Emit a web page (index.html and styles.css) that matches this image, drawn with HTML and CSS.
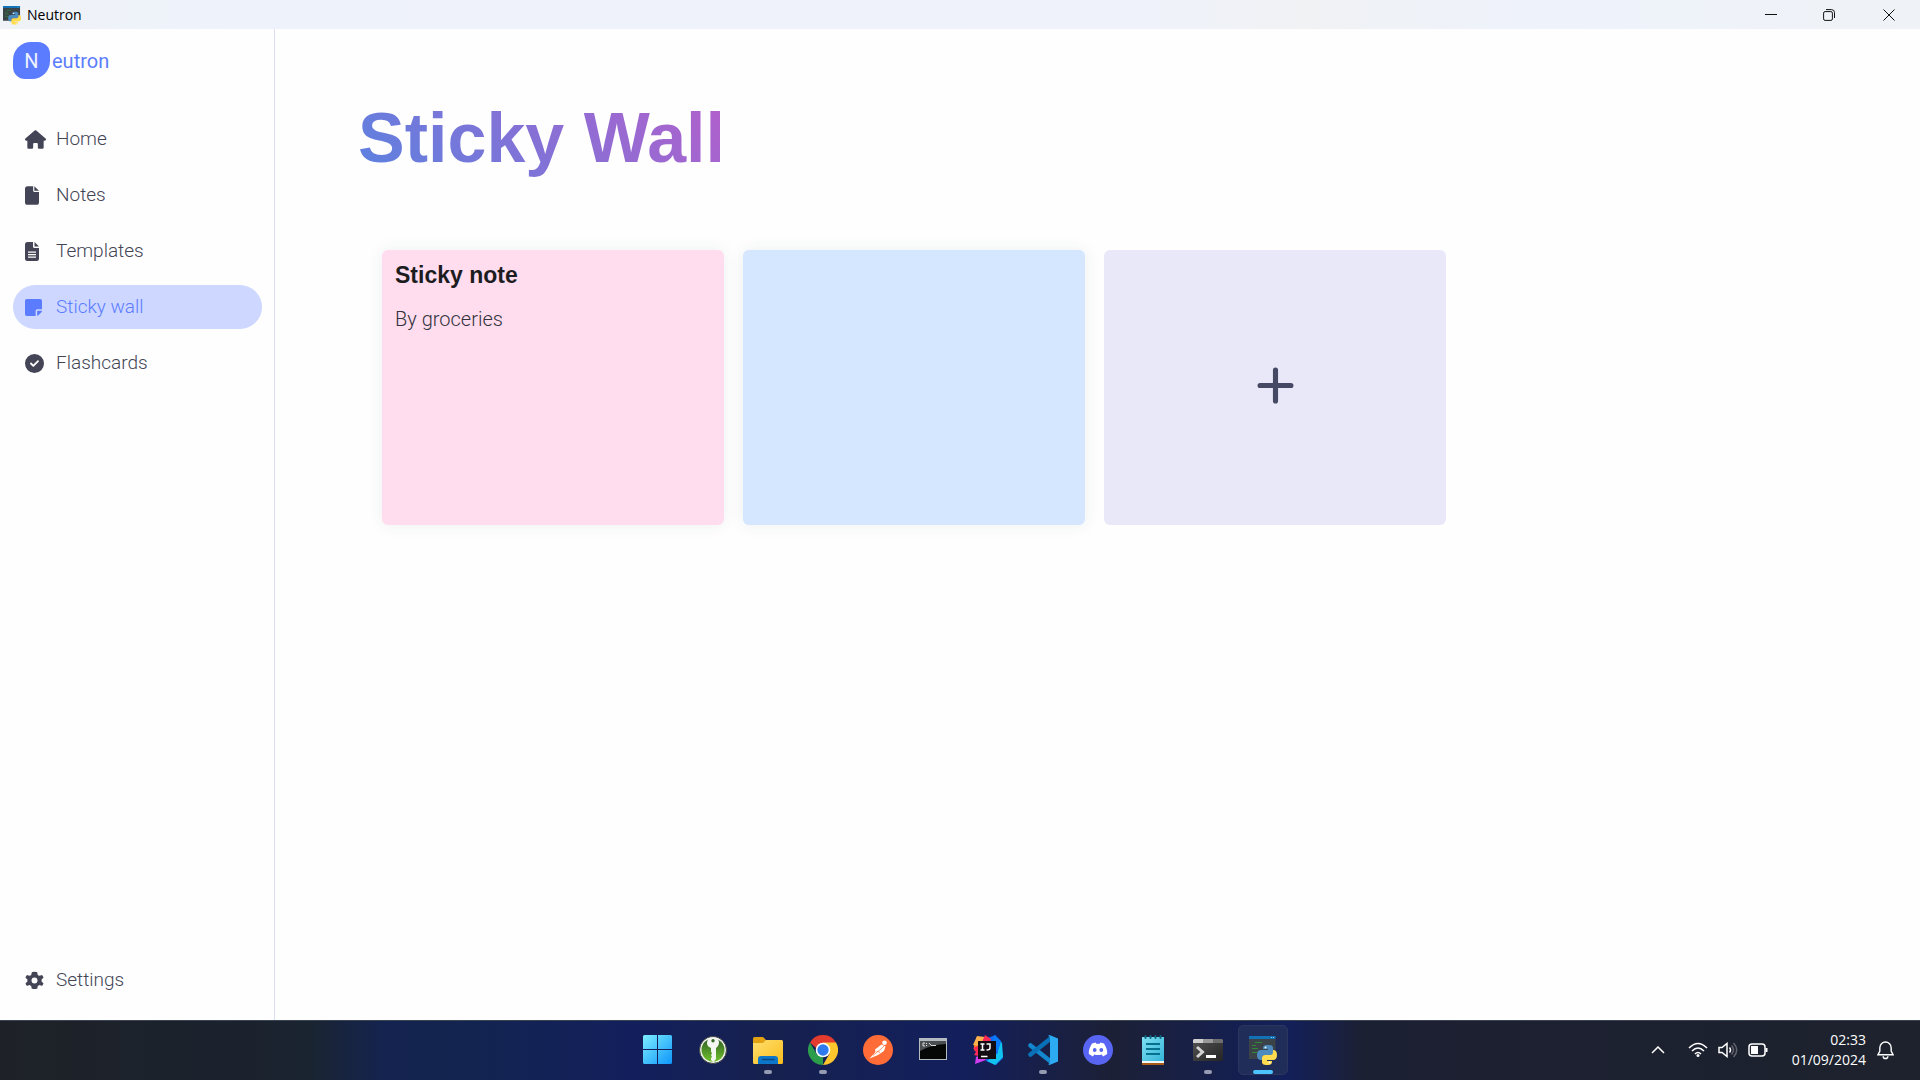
FILE: index.html
```html
<!DOCTYPE html>
<html lang="en">
<head>
<meta charset="utf-8">
<title>Neutron</title>
<link rel="stylesheet" href="styles.css">
</head>
<body>
<header class="titlebar">
  <svg class="app-icon" viewBox="0 0 28 30"><use href="#py-app"/></svg>
  <span class="titlebar-name">Neutron</span>
  <div class="window-controls">
    <button aria-label="Minimize"><svg viewBox="0 0 12 12"><path d="M0 5.500h12"/></svg></button>
    <button aria-label="Restore"><svg viewBox="0 0 12 12"><rect x=".6" y="2.600" width="8.800" height="8.800" rx="1.500"/><path d="M3 .6h5.500a3 3 0 0 1 3 3V9"/></svg></button>
    <button aria-label="Close"><svg viewBox="0 0 12 12"><path d="M.5.5l11 11M11.500.5l-11 11"/></svg></button>
  </div>
</header>

<div class="app">
  <aside class="sidebar">
    <a class="brand" href="#"><span class="brand-mark">N</span><span>eutron</span></a>
    <nav class="nav">
      <a class="nav-link" href="#"><svg class="nav-icon wide" viewBox="0 0 576 512"><path d="M575.800 255.500c0 18-15 32.100-32 32.100h-32l.7 160.200c0 2.700-.2 5.400-.5 8.100V472c0 22.100-17.900 40-40 40H392c-22.100 0-40-17.900-40-40v-88c0-17.700-14.300-32-32-32h-64c-17.700 0-32 14.300-32 32v88c0 22.100-17.900 40-40 40h-80c-22.100 0-40-17.900-40-40V287.600H32c-18 0-32-14-32-32.100 0-9 3-17 10-24L266.400 8c7-7 15-8 22-8s15 2 21 7l255.400 224.500c8 7 12 15 11 24z"/></svg>Home</a>
      <a class="nav-link" href="#"><svg class="nav-icon narrow" viewBox="0 0 384 512"><path d="M0 64C0 28.700 28.700 0 64 0h160v128c0 17.700 14.300 32 32 32h128v288c0 35.300-28.700 64-64 64H64c-35.300 0-64-28.700-64-64zm384 64H256V0z"/></svg>Notes</a>
      <a class="nav-link" href="#"><svg class="nav-icon narrow" viewBox="0 0 14 19"><path fill-rule="evenodd" d="M2.500 0Q0 0 0 2.500v14Q0 19 2.500 19h9q2.500 0 2.500-2.500V6H9.500Q8 6 8 4.500V0zM9.500 0v4.500H14zM3 9.500h8v1.200H3zM3 12h8v1.200H3zM3 14.500h8v1.200H3z"/></svg>Templates</a>
      <a class="nav-link active" href="#" aria-current="page"><svg class="nav-icon note" viewBox="0 0 448 448"><path d="M280 448H48a48 48 0 0 1-48-48V48A48 48 0 0 1 48 0h352a48 48 0 0 1 48 48v220H320a40 40 0 0 0-40 40zm168-136q0 22-14 36l-74 74q-14 14-40 18V330a18 18 0 0 1 18-18z"/></svg>Sticky wall</a>
      <a class="nav-link" href="#"><svg class="nav-icon" viewBox="0 0 512 512"><path fill-rule="evenodd" d="M256 512a256 256 0 1 0 0-512 256 256 0 0 0 0 512zm113-303L241 337c-9.400 9.400-24.600 9.400-33.900 0l-64-64c-22-22 12-56 33.900-33.900l47 47 111-111c22-22 56 12 34 33.900z"/></svg>Flashcards</a>
    </nav>
    <nav class="nav nav-bottom">
      <a class="nav-link" href="#"><svg class="nav-icon" viewBox="0 0 512 512"><path d="M495.900 166.600c3.200 8.700.5 18.400-6.400 24.600l-43.300 39.400a197 197 0 0 1 0 50.800l43.300 39.400c6.900 6.200 9.600 15.900 6.400 24.600a244 244 0 0 1-25.500 44.100c-6.100 8.300-16.500 11.300-25.600 8.400l-55.700-17.700a190 190 0 0 1-44.100 25.400l-12.500 57.100c-2 9.100-9 16.300-18.200 17.800a254 254 0 0 1-117 0c-9.200-1.500-16.200-8.700-18.200-17.800l-12.500-57.100a190 190 0 0 1-44-25.400l-55.700 17.700c-8.800 2.800-18.600.3-24.500-6.800a244 244 0 0 1-26.600-45.700c-3.200-8.700-.5-18.400 6.400-24.600l43.300-39.400a197 197 0 0 1 0-50.800l-43.300-39.400c-6.900-6.200-9.600-15.900-6.400-24.600A244 244 0 0 1 43.900 119c6-7 15.700-9.600 24.500-6.800l55.700 17.700a190 190 0 0 1 44-25.400l12.500-57.100c2-9.100 9-16.300 18.200-17.800a254 254 0 0 1 114.400 0c9.200 1.500 16.200 8.700 18.200 17.800l12.500 57.100a190 190 0 0 1 44.100 25.400l55.700-17.700c8.800-2.800 18.600-.3 24.500 6.800a244 244 0 0 1 27.700 47.600zM256 336a80 80 0 1 0 0-160 80 80 0 1 0 0 160z" fill-rule="evenodd"/></svg>Settings</a>
    </nav>
  </aside>

  <main class="content">
    <h1 class="page-title">Sticky Wall</h1>
    <section class="wall">
      <article class="card pink">
        <h2>Sticky note</h2>
        <p>By groceries</p>
      </article>
      <article class="card blue"></article>
      <button class="card add" aria-label="Add sticky note"><svg viewBox="0 0 36 36"><path d="M18 3v30M3 18h30"/></svg></button>
    </section>
  </main>
</div>

<footer class="taskbar">
  <div class="task-apps">
    <button class="task" aria-label="Start"><svg viewBox="0 0 30 30"><path fill="url(#win)" d="M1.500 0H14v14H0V1.500Q0 0 1.500 0zM15 0h12.500Q29 0 29 1.500V14H15zM0 15h14v14H1.500Q0 29 0 27.500zM15 15h14v12.500q0 1.500-1.500 1.500H15z"/></svg></button>
    <button class="task" aria-label="KeePassXC"><svg viewBox="0 0 30 30"><circle cx="15" cy="15" r="13.500" fill="#f1f3ef" stroke="#41473f"/><circle cx="15" cy="15" r="11.500" fill="url(#kp)"/><path fill="#f4f6f2" fill-rule="evenodd" d="M12 2.500h6c2 1 3 3 3 5s-1 4-3 5.500V24l-2.500 3-2.500-2v-2l1-1-1-2 1-1.500-1-2V13C10 12 9 10 9 8s1-4.500 3-5.500zM15 4a1.700 1.700 0 1 0 0 3.400A1.700 1.700 0 0 0 15 4z"/></svg></button>
    <button class="task running" aria-label="File Explorer"><svg viewBox="0 0 30 30"><path fill="#e2a212" d="M0 3.500Q0 2 1.500 2H10l3 3v6H0z"/><path fill="url(#fold)" d="M0 8h10l3-3h15.500Q30 5 30 6.500v21Q30 29 28.500 29h-27Q0 29 0 27.500z"/><path fill="#0f77ca" d="M5 29v-5q0-3 3-3h14q3 0 3 3v5z"/><path stroke="#064a86" stroke-width="1.500" stroke-linecap="round" d="M9.500 24.500h11.500"/></svg></button>
    <button class="task running" aria-label="Chrome"><svg viewBox="0 0 30 30"><path fill="#e33b2e" d="M2 7.500a15 15 0 0 1 26 0L22 13 8 13z"/><path fill="#2c9d4b" d="M2 7.500 8.600 19 15 22.500V30A15 15 0 0 1 2 7.500z"/><path fill="#fdc62c" d="M15 7.500h13A15 15 0 0 1 15 30l6.500-11.300z"/><circle cx="15" cy="15" r="7.300" fill="#fff"/><circle cx="15" cy="15" r="5.700" fill="#2d7bee"/></svg></button>
    <button class="task" aria-label="Postman"><svg viewBox="0 0 30 30"><circle cx="15" cy="15" r="15" fill="#ff6c37"/><circle cx="21.500" cy="7.700" r="2.300" fill="#fff"/><path fill="#fff" d="M18.500 9.500l4 2-1.500 4.500-6 4-8.500 3.500 6-6.500-.5-2.500z"/><path fill="none" stroke="#ff6c37" stroke-width=".7" d="M10 20.500l8-6.500 3-3M13.500 16l3.500 1.500"/></svg></button>
    <button class="task" aria-label="Command Prompt"><svg viewBox="0 0 30 30"><path fill="#b5bcc1" d="M1 3h28v22H1z"/><path fill="#050606" d="M2 6h26v18H2z"/><path fill="#4b4f51" d="M2 6h26v3Q12 10 2 16z"/><path fill="none" stroke="#ddd" d="M7 8H5v3h2M8.500 8v1M8.500 10v1M11 8l3 3M14 10.500h4"/></svg></button>
    <button class="task" aria-label="IntelliJ IDEA"><svg viewBox="0 0 30 30"><path fill="#0f6cf5" d="M15 3l7-3 6 6 2 17-7 7-10-4z"/><path fill="#12c3ef" d="M25 4l4 4 1 14-8 8-8-4 11-8z"/><path fill="#087cfa" d="M22 0l6 7-3 9-5-10z"/><path fill="#fc801d" d="M1 10l3-8 8 4-4 14-7-5z"/><path fill="#ffb14d" d="M4 1l8 1-5 9-7-1z"/><path fill="#fe2857" d="M12 0l6 4-2 6-9 2z"/><path fill="#fe2857" d="M0 13l7-3 3 12-9-2 2-3z"/><path fill="#d33df0" d="M3 22l7-3 3 6-11 4z"/><path fill="#130c12" d="M5 6h18v18H5z"/><path fill="none" stroke="#fff" stroke-width="1.500" d="M7.500 9h4M9.500 9v6M7.500 15h4M13.500 9H17v4q0 2-3.500 2M8 21.500h6.500"/></svg></button>
    <button class="task running" aria-label="Visual Studio Code"><svg viewBox="0 0 30 30"><path fill="none" stroke="#1387cf" stroke-width="4.500" stroke-linecap="round" d="M2.500 10.500L22 26"/><path fill="none" stroke="#0871b8" stroke-width="4.500" stroke-linecap="round" d="M2.500 19.500L22 4"/><path fill="#2caaf2" d="M21.500 0L30 3.500v23L21.500 30l-1.500-1q2 0 2-2V3q0-2-2-2z"/></svg></button>
    <button class="task" aria-label="Discord"><svg viewBox="0 0 30 30"><circle cx="15" cy="15" r="15" fill="#5865f2"/><path fill="#fff" fill-rule="evenodd" d="M9 8.500l3.500-1 .8 1.300h3.400l.8-1.300 3.500 1c2.300 3.500 3.500 7 3.200 10.500L20 21.500l-1.200-2q-3.800 1-7.600 0l-1.200 2L5.800 19C5.500 15.500 6.700 12 9 8.500zM11.700 13a1.900 2 0 1 0 0 4 1.900 2 0 0 0 0-4zm6.600 0a1.900 2 0 1 0 0 4 1.900 2 0 0 0 0-4z"/></svg></button>
    <button class="task" aria-label="Notepad"><svg viewBox="0 0 30 30"><path fill="#a85b16" d="M4 26h22v4H4z"/><path fill="#f4f7f8" d="M4 24h22v4H4z"/><path fill="url(#pad)" d="M4 2h22v24H4z"/><path stroke="#0d6682" stroke-width="2" stroke-linecap="round" d="M7.500 1v2M12.500 1v2M17.500 1v2M22.500 1v2" fill="none"/><path stroke="#06708f" stroke-width="1.800" d="M8 9h14M8 14h14M8 19h14" fill="none"/></svg></button>
    <button class="task running" aria-label="Terminal"><svg viewBox="0 0 30 30"><path fill="url(#term)" d="M0 5h30v20q0 1-1 1H1q-1 0-1-1z"/><path fill="#d0d0d0" d="M1 4h9v4H0V5z"/><path fill="#999" d="M10 4h10v4H10z"/><path fill="#6e6e6e" d="M20 4h9l1 1v3H20z"/><path fill="none" stroke="#d4d4d4" stroke-width="3" d="M4 12l5.500 5L4 22"/><path stroke="#fff" stroke-width="3" d="M13 21.500h10"/></svg></button>
    <button class="task current" aria-label="Neutron"><svg viewBox="0 0 28 30"><use href="#py-app"/></svg></button>
  </div>
  <div class="tray">
    <button class="tray-up" aria-label="Show hidden icons"><svg viewBox="0 0 14 8"><path d="M1 7l6-6 6 6"/></svg></button>
    <div class="tray-status">
      <svg class="wifi" viewBox="0 0 20 16"><path d="M1 6q9-9 18 0M4 9q6-6 12 0M7 12q3-3 6 0"/><circle cx="10" cy="13.500" r="1.500" fill="#fff" stroke="none"/></svg>
      <svg class="sound" viewBox="0 0 20 16"><path d="M1 5.500h3L9 1.500v13L4 10.500H1zM11.500 5.500q2 2.500 0 5"/><path opacity=".3" d="M13.500 3.500q4 4.500 0 9M15.500 1q6.500 7 0 14"/></svg>
      <svg class="battery" viewBox="0 0 20 14"><rect x="1" y="1" width="16" height="12" rx="3"/><path fill="#fff" stroke="none" d="M3 3h7v8H3z"/><path d="M18.500 5v4" stroke-width="2"/></svg>
    </div>
    <div class="clock"><time>02:33</time><time>01/09/2024</time></div>
    <button class="bell" aria-label="Notifications"><svg viewBox="0 0 18 20"><path d="M1 14.500l2-4V7a6 6 0 0 1 12 0v3.500l2 4zM6.500 16a2.500 2.500 0 0 0 5 0"/></svg></button>
  </div>
</footer>

<svg class="defs" aria-hidden="true">
  <defs>
    <linearGradient id="win" x1="0" y1="0" x2="1" y2="1"><stop offset="0" stop-color="#7defff"/><stop offset="1" stop-color="#0e95fa"/></linearGradient>
    <linearGradient id="kp" x1="0" y1="0" x2="0" y2="1"><stop offset="0" stop-color="#2f5f25"/><stop offset="1" stop-color="#6fc02c"/></linearGradient>
    <linearGradient id="fold" x1="0" y1="0" x2="1" y2="1"><stop offset="0" stop-color="#ffdf6f"/><stop offset="1" stop-color="#fbbd1c"/></linearGradient>
    <linearGradient id="pad" x1="0" y1="0" x2="1" y2="1"><stop offset="0" stop-color="#7fe0f3"/><stop offset="1" stop-color="#35b5d8"/></linearGradient>
    <linearGradient id="term" x1="0" y1="0" x2="1" y2="1"><stop offset="0" stop-color="#535353"/><stop offset="1" stop-color="#242424"/></linearGradient>
    <symbol id="py-app" viewBox="0 0 28 30">
      <path fill="#3b4349" d="M0 1h26.500v23H0z"/><path fill="#1272b5" d="M0 1h26.500v3H0z"/><path fill="#8cc7ec" d="M22 2h1v1h-1zM24 2h1v1h-1z"/>
      <path stroke="#2f8a35" d="M6 7.500h7M3 10.500h4M3 13.500h6M3 17.500h5" fill="none"/>
      <path fill="#4b8bbf" d="M18 10h2q4 0 4 3v5q0 2-3 2h-5q-3 0-3 3v2h-1q-4 0-4-5t4-5h7v-1h-5v-1q0-3 4-3z"/>
      <path fill="#ffdb4f" d="M24 15q4 0 4 5t-4 5h-6v1h5v1q0 3-4 3h-2q-4 0-4-3v-4q0-3 3-3h5q3 0 3-3z"/>
      <circle cx="16.500" cy="12.500" r="1" fill="#e9f2f8"/><circle cx="20.500" cy="27.500" r="1" fill="#fff8dd"/>
    </symbol>
  </defs>
</svg>
</body>
</html>
```
FILE: styles.css
```css
* { box-sizing: border-box; }

body {
  margin: 0;
  min-height: 100vh;
  display: flex;
  flex-direction: column;
  background: #fefefe;
  color: #434556;
  font: 300 20px/24px Roboto, sans-serif;
}

button { border: 0; padding: 0; background: none; font: inherit; color: inherit; }
a { color: inherit; text-decoration: none; }
svg { display: block; }
.defs { position: absolute; width: 0; height: 0; }

.titlebar {
  display: flex;
  align-items: center;
  height: 29px;
  padding-left: 3px;
  gap: 6px;
  background: linear-gradient(90deg, #eff3f7, #eef2fb 12%, #eff2fa 60%, #f0f2f4 68%, #eef2fb 80%, #eff3f7);
  color: #000;
  font: 400 14px/20px "Open Sans", sans-serif;
}
.app-icon { width: 18px; height: 20px; }
.window-controls { display: flex; margin-left: auto; }
.window-controls button { width: 58px; height: 28px; display: grid; place-items: center; }
.window-controls button:last-child { width: 62px; }
.window-controls svg { width: 12px; height: 12px; fill: none; stroke: #111; }

.app { flex: 1; display: flex; }

.sidebar {
  width: 275px;
  padding: 13px 12px 18px 13px;
  border-right: 1px solid #dadef0;
  display: flex;
  flex-direction: column;
}
.brand { display: flex; align-items: center; gap: 2px; color: #5c7cff; font-weight: 400; }
.brand-mark {
  width: 37px;
  height: 37px;
  display: grid;
  place-items: center;
  border-radius: 18px 12px 18px 12px;
  background: #5c7cff;
  color: #eef1ff;
}
.nav { display: flex; flex-direction: column; gap: 12px; margin-top: 38px; }
.nav-bottom { margin-top: auto; }
.nav-link {
  display: grid;
  grid-template-columns: 20px 1fr;
  align-items: center;
  gap: 11px;
  height: 44px;
  padding: 0 12px;
  border-radius: 22px;
  font-size: 19px;
}
.nav-link.active { background: #cdd7ff; color: #5c7cff; }
.nav-icon { height: 19px; width: 19px; fill: currentColor; }
.nav-icon.wide { width: 21px; }
.nav-icon.narrow { width: 14px; }
.nav-icon.note { width: 17px; height: 17px; }

.content { flex: 1; padding: 69px 83px; }
.page-title {
  width: fit-content;
  margin: 0;
  font: 700 70px/80px "Liberation Sans", Arial, sans-serif;
  background: linear-gradient(45deg, #5a82e0, #b45fcb);
  -webkit-background-clip: text;
  background-clip: text;
  color: transparent;
}
.wall {
  display: grid;
  grid-template-columns: repeat(auto-fill, 342px);
  gap: 19px;
  margin-top: 72px;
  padding-left: 24px;
}
.card { height: 275px; padding: 11px 13px; border-radius: 6px; }
.card h2 { margin: 0; color: #1c1c1f; font: 700 23px/28px "Liberation Sans", Arial, sans-serif; }
.card p { margin: 18px 0 0; color: #33333d; }
.pink { background: #ffddee; }
.blue { background: #d5e6ff; }
.pink, .blue { box-shadow: 0 0 16px rgba(40, 60, 90, .08); }
.add { display: grid; place-items: center; padding-bottom: 15px; background: #e9e8f8; }
.add svg { width: 37px; height: 37px; fill: none; stroke: #454963; stroke-width: 5; stroke-linecap: round; }

.taskbar {
  display: grid;
  grid-template-columns: 1fr auto 1fr;
  align-items: center;
  height: 60px;
  padding-bottom: 1px;
  border-top: 1px solid #3a4350;
  background: linear-gradient(90deg, #1e2228, #1b222e 13%, #1a2430 16%, #14234f 20%, #12244f 24%, #131f5c 33%, #16214f 40%, #131f5c 50%, #1c2036 58%, #121f5a 67%, #1c2033 71%, #1d222d);
}
.task-apps { grid-column: 2; display: flex; gap: 5px; }
.task {
  position: relative;
  width: 50px;
  height: 50px;
  display: grid;
  place-items: center;
  border-radius: 5px;
}
.task svg { width: 30px; height: 30px; }
.task.running::after, .task.current::after {
  content: "";
  position: absolute;
  bottom: 1px;
  left: 21px;
  width: 8px;
  height: 4px;
  border-radius: 2px;
  background: #959bb0;
}
.task.current { background: #212d59; border: 1px solid #2b355e; }
.task.current::after { left: 14px; width: 20px; bottom: 0; background: #4cc2ff; }

.tray { display: flex; align-items: center; justify-self: end; padding-right: 26px; color: #fff; }
.tray svg { fill: none; stroke: #fff; stroke-width: 1.500; }
.tray-up svg { width: 14px; height: 8px; }
.tray-status { display: flex; align-items: center; gap: 10px; margin-left: 23px; }
.wifi, .sound { width: 20px; height: 16px; }
.battery { width: 20px; height: 14px; }
.clock {
  display: flex;
  flex-direction: column;
  align-items: flex-end;
  margin: 0 11px 0 24px;
  font: 400 14px/20px "Open Sans", sans-serif;
}
.bell svg { width: 17px; height: 19px; }
```
